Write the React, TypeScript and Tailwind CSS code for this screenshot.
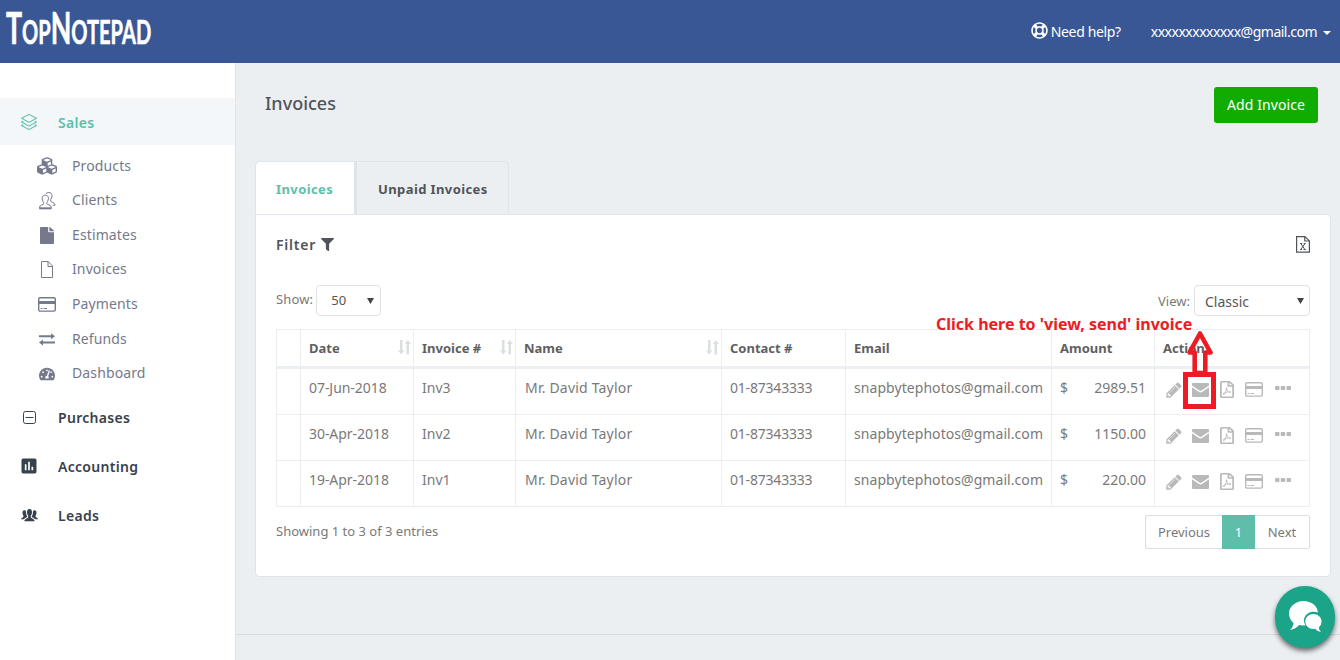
import type { ReactNode } from 'react'
import { FaCubes, FaFile, FaFilter, FaRegFilePdf, FaRegLifeRing, FaTachometerAlt } from 'react-icons/fa'
import { MdPoll } from 'react-icons/md'
import { SlLayers } from 'react-icons/sl'

const invoices = [
  { date: '07-Jun-2018', number: 'Inv3', amount: '2989.51' },
  { date: '30-Apr-2018', number: 'Inv2', amount: '1150.00' },
  { date: '19-Apr-2018', number: 'Inv1', amount: '220.00' },
]

const columns = 'grid grid-cols-[24px_113px_102px_206px_124px_206px_103px_155px]'

/* ---- Icons ---- */

function ClientsIcon() {
  return (
    <svg width="17" height="18" viewBox="0 0 17 18" fill="none" stroke="currentColor" strokeWidth="1">
      <path d="M4.7 10.5C3.6 9 3 7.200 3.200 5.800 3.400 4 4.700 3.200 6.300 3.200S9.200 4 9.400 5.800C9.600 7.200 9 9 7.900 10.500v1.300c0 .8 4.300 1.200 4.300 3.200v.8" />
      <path d="M4.700 10.500v1.300C4.700 12.600.6 13 .6 15v.8" />
      <path d="M7 1.600C7.700.8 8.500.500 9.600.500c2 0 3.400 1.200 3.400 3.300 0 1.500-.5 2.700-1.400 3.900v1.300c0 1 4.400 1.700 4.400 3.700v.6h-2.200" />
      <path d="M.2 16.300h12.400" strokeWidth="2" />
    </svg>
  )
}

function PageIcon() {
  return (
    <svg width="12" height="17" viewBox="0 0 12 17" fill="none" stroke="currentColor">
      <path d="M.5.500h6.700l4.300 4.500v11.500H.5zM7 .500v5h4.500" />
    </svg>
  )
}

function CardIcon() {
  return (
    <svg width="18" height="15" viewBox="0 0 18 15" fill="none" stroke="currentColor">
      <rect x=".7" y=".7" width="16.600" height="13.400" rx="1.300" strokeWidth="1.400" />
      <path d="M1 5.500h16" strokeWidth="3" />
      <path d="M2.500 11.500h2M5.500 11.500h3.500" />
    </svg>
  )
}

function ExchangeIcon() {
  return (
    <svg width="16" height="13" viewBox="0 0 16 13" fill="currentColor">
      <path d="M0 2.300h12V.300l4 3-4 3v-2H0zM16 8.600H4v-2l-4 3 4 3v-2h12z" />
    </svg>
  )
}

function MinusSquareIcon() {
  return (
    <svg width="13" height="13" viewBox="0 0 13 13" fill="none" stroke="currentColor">
      <rect x=".5" y=".5" width="12" height="12" rx="2" />
      <path d="M2.500 6.500h8" />
    </svg>
  )
}

function LeadsIcon() {
  return (
    <svg width="17" height="13" viewBox="0 0 17 13" fill="currentColor">
      <path d="M8.500 0C10.200 0 11 1.200 11 3.200c0 1.700-.6 2.700-1.200 3.500v1.500c0 1 3.900 1.500 3.900 4H3.300c0-2.500 3.900-3 3.900-4V6.700C6.600 5.900 6 4.900 6 3.200 6 1.200 6.800 0 8.500 0z" />
      <path d="M3.400 1.300c1 0 1.700.6 1.700 2.200 0 1.600.3 2.500 1.200 3.900 0 1-2.800 1.400-3.500 2.800H0c0-1.700 2.400-1.600 2.400-2.500V6.500C1.900 5.800 1.500 5 1.500 3.700 1.500 2.100 2.300 1.300 3.400 1.300z" />
      <path d="M13.600 1.300c-1 0-1.700.6-1.700 2.200 0 1.600-.3 2.500-1.200 3.900 0 1 2.800 1.400 3.500 2.800H17c0-1.700-2.400-1.600-2.400-2.500V6.500c.5-.7.9-1.500.9-2.800 0-1.600-.8-2.400-1.900-2.400z" />
    </svg>
  )
}

function SortIcon() {
  return (
    <svg className="shrink-0 -translate-y-px text-[#dcdfe0]" width="13" height="15" viewBox="0 0 13 15" fill="currentColor">
      <path d="M2 0h2.500v10.500H6.300L3.200 14.500 0 10.500h2zM8.500 14.500H11V4h2L9.800 0 6.800 4h1.700z" />
    </svg>
  )
}

function ExcelIcon() {
  return (
    <svg width="14" height="17" viewBox="0 0 14 17" fill="none" stroke="currentColor">
      <path d="M.6.600h8.300l4.500 4.300v11.200H.6zM8.800.600V5h4.600" strokeWidth="1.200" />
      <path d="M4.800 7.500l4 6M9 7.500l-4.300 6M4 7.500h2.200M7.700 7.500h2M4 13.500h1.900M7.500 13.500h2.300" />
    </svg>
  )
}

function PencilIcon() {
  return (
    <svg width="18" height="18" viewBox="0 0 1792 1792" fill="currentColor">
      <path d="M491 1536l91-91-235-235-91 91v107h128v128h107zm523-928q0-22-22-22-10 0-17 7l-542 542q-7 7-7 17 0 22 22 22 10 0 17-7l542-542q7-7 7-17zm-54-192l416 416-832 832h-416v-416zm683 96q0 53-37 90l-166 166-416-416 166-165q36-38 90-38 53 0 91 38l235 234q37 39 37 91z" />
    </svg>
  )
}

function EnvelopeIcon() {
  return (
    <svg width="17" height="14" viewBox="0 0 17 14" fill="currentColor">
      <path d="M1 0h15a1 1 0 0 1 1 1v1.500L9.700 7.500q-1.200.8-2.400 0L0 2.500V1a1 1 0 0 1 1-1z" />
      <path d="M0 4.200l6.600 4.600q1.900 1.200 3.800 0L17 4.200V13a1 1 0 0 1-1 1H1a1 1 0 0 1-1-1z" />
    </svg>
  )
}

function MoreIcon() {
  return (
    <svg width="16" height="4" viewBox="0 0 16 4" fill="currentColor">
      <rect width="4.500" height="4" rx="1" />
      <rect x="5.700" width="4.500" height="4" rx="1" />
      <rect x="11.500" width="4.500" height="4" rx="1" />
    </svg>
  )
}

function ChatIcon() {
  return (
    <svg width="33" height="32" viewBox="0 0 33 32" fill="currentColor">
      <path d="M14.500 0C22.500 0 28.600 5 28.900 11.500c-1.600-.7-3.300-.9-5-.8-5.100.3-8.900 4-8.900 8.700 0 1.900.6 3.400 1.500 4.800-2.300.4-4.300.3-6.400-.2-2.300 2.600-5 4.600-9 4.900 2-2.100 3.300-4.200 3.400-7C1.700 19.700 0 16.300 0 12.500 0 5.600 6.500 0 14.500 0z" />
      <path d="M24.300 13c4.600 0 8.200 3.200 8.200 7.500 0 2.500-1.100 4.600-2.700 5.800.1 1.800.9 3.300 2.400 4.700-2.600-.2-4.400-1.400-5.900-3.200-5.500 1-10-2.500-10-7.300 0-4.300 3.500-7.500 8-7.500z" />
    </svg>
  )
}

/* ---- Sidebar ---- */

const salesItems = [
  { label: 'Products', icon: <FaCubes size={20} /> },
  { label: 'Clients', icon: <ClientsIcon /> },
  { label: 'Estimates', icon: <FaFile className="h-[17px] w-[14px]" preserveAspectRatio="none" /> },
  { label: 'Invoices', icon: <PageIcon /> },
  { label: 'Payments', icon: <CardIcon /> },
  { label: 'Refunds', icon: <ExchangeIcon /> },
  { label: 'Dashboard', icon: <FaTachometerAlt size={16} /> },
]

function NavSection({ icon, label }: { icon: ReactNode; label: string }) {
  return (
    <div className="flex h-[49px] items-center text-[14px] font-semibold text-[#38424d]">
      <span className="flex w-[58px] justify-center">{icon}</span>
      <span className="tracking-[0.3px]">{label}</span>
    </div>
  )
}

function Sidebar() {
  return (
    <aside className="w-[236px] shrink-0 border-r border-[#e0e5e9] bg-white pt-[35px]">
      <div className="flex h-[47px] items-center bg-[#f3f7fa] text-[14px] font-semibold text-[#5fbeaa]">
        <span className="flex w-[58px] justify-center">
          <SlLayers size={16} />
        </span>
        <span className="pt-px tracking-[0.3px]">Sales</span>
      </div>
      <div className="pt-[3px]">
        {salesItems.map((item) => (
          <div key={item.label} className="flex h-[34.550px] items-center text-[14px] text-[#75798b]">
            <span className="ml-[36px] flex w-[22px] justify-center pt-[2px]">{item.icon}</span>
            <span className="ml-[14px] tracking-[0.12px]">{item.label}</span>
          </div>
        ))}
      </div>
      <div className="pt-[3px]">
        <NavSection icon={<MinusSquareIcon />} label="Purchases" />
        <NavSection icon={<MdPoll size={20} />} label="Accounting" />
        <NavSection icon={<LeadsIcon />} label="Leads" />
      </div>
    </aside>
  )
}

/* ---- Invoice table ---- */

function HeadCell({ label, sortable }: { label: string; sortable?: boolean }) {
  return (
    <div className="flex items-center justify-between border-r border-[#ebeff2] pr-[2px] pl-2">
      <span className="pt-[2px]">{label}</span>
      {sortable && <SortIcon />}
    </div>
  )
}

function Cell({ className = 'pl-2', children }: { className?: string; children?: ReactNode }) {
  return <div className={`border-r border-[#ebeff2] pt-[8px] pr-2 ${className}`}>{children}</div>
}

function RowActions({ highlighted }: { highlighted?: boolean }) {
  return (
    <div className="relative flex border-r border-[#ebeff2] pt-[12px] pl-[10px] text-[#b9b9b9]">
      <PencilIcon />
      <span className="ml-[9px] pt-[2px]">
        <EnvelopeIcon />
      </span>
      <FaRegFilePdf className="ml-[11px] h-[17px] w-[14px]" preserveAspectRatio="none" />
      <span className="ml-[11px] pt-px">
        <CardIcon />
      </span>
      <span className="ml-[12px] pt-[5px]">
        <MoreIcon />
      </span>
      {highlighted && (
        <>
          <span className="absolute top-[3px] left-[28px] h-[37px] w-[33px] border-5 border-[#ed1c24]" />
          <svg className="absolute top-[-39px] left-[31px]" width="28" height="43" viewBox="0 0 28 43" fill="none">
            <path d="M11.500 24h5v18h-5z" fill="#fff" />
            <path d="M14 3.500L24.500 22.500H19.300V43H8.700V22.500H3.500z" stroke="#ed1c24" strokeWidth="4.600" strokeLinejoin="round" />
          </svg>
        </>
      )}
    </div>
  )
}

function InvoiceTable() {
  return (
    <div className="w-[1034px] border-t border-l border-[#ebeff2] text-[14px] text-[#797979]">
      <div className={`${columns} h-[39px] border-b-3 border-[#ebeff2] text-[13px] font-bold text-[#5f5f5f]`}>
        <HeadCell label="" />
        <HeadCell label="Date" sortable />
        <HeadCell label="Invoice #" sortable />
        <HeadCell label="Name" sortable />
        <HeadCell label="Contact #" />
        <HeadCell label="Email" />
        <HeadCell label="Amount" />
        <HeadCell label="Action" />
      </div>
      {invoices.map((invoice, i) => (
        <div key={invoice.number} className={`${columns} h-[46px] border-b border-[#ebeff2]`}>
          <Cell />
          <Cell className="pl-2 tracking-[-0.050px]">{invoice.date}</Cell>
          <Cell>{invoice.number}</Cell>
          <Cell className="pl-[9px] tracking-[0.200px]">Mr. David Taylor</Cell>
          <Cell className="pl-2 tracking-[-0.200px]">01-87343333</Cell>
          <Cell className="pl-2 tracking-[0.060px]">snapbytephotos@gmail.com</Cell>
          <Cell>
            <div className="flex justify-between">
              <span>$</span>
              <span>{invoice.amount}</span>
            </div>
          </Cell>
          <RowActions highlighted={i === 0} />
        </div>
      ))}
    </div>
  )
}

function SelectBox({ value, className }: { value: string; className: string }) {
  return (
    <div className={`flex h-[31px] items-center justify-between rounded-[4px] border border-[#dfe2e5] bg-white text-[#565656] ${className}`}>
      <span className="pt-px">{value}</span>
      <svg width="7" height="6" viewBox="0 0 7 6" fill="#444">
        <path d="M0 0h7L3.500 6z" />
      </svg>
    </div>
  )
}

function InvoicePanel() {
  return (
    <section className="h-[363px] w-[1076px] rounded-r-[5px] rounded-bl-[5px] border border-[#dfe4ea] bg-white px-5">
      <div className="flex h-[58px] items-center justify-between">
        <div className="flex items-center gap-[5px] text-[14px] font-semibold tracking-[0.8px] text-[#505458]">
          Filter <FaFilter size={13} />
        </div>
        <span className="text-[#505458]">
          <ExcelIcon />
        </span>
      </div>
      <div className="flex h-[56px] items-start justify-between pt-[12px] text-[13px] text-[#797979]">
        <div className="flex items-center gap-[3px]">
          <span className="pb-[2px] tracking-[0.150px]">Show:</span>
          <SelectBox value="50" className="w-[65px] pr-[6px] pl-[14px] text-[13px]" />
        </div>
        <div className="flex items-center gap-[4px]">
          <span className="pt-[3px]">View:</span>
          <SelectBox value="Classic" className="w-[116px] pr-[5px] pl-[10px] text-[14px]" />
        </div>
      </div>
      <InvoiceTable />
      <div className="flex items-start justify-between pt-[8px] text-[13px] text-[#797979]">
        <span className="pt-[7px]">Showing 1 to 3 of 3 entries</span>
        <div className="flex h-[34px] items-stretch leading-[34px]">
          <span className="w-[77px] rounded-l-[3px] border border-r-0 border-[#ddd] text-center leading-[33px]">Previous</span>
          <span className="w-[33px] bg-[#5fbeaa] text-center text-white">1</span>
          <span className="w-[55px] rounded-r-[3px] border border-l-0 border-[#ddd] text-center leading-[33px]">Next</span>
        </div>
      </div>
    </section>
  )
}

export default function App() {
  return (
    <div className="relative flex h-[660px] w-[1340px] flex-col overflow-hidden bg-[#ebeff2] font-['Noto_Sans',sans-serif]">
      <header className="flex h-[63px] shrink-0 items-center justify-between bg-[#3a5795] pr-[9px] pl-[6px] text-white">
        <div className="mb-[10px] w-[146px] origin-left scale-x-[0.608] font-['Liberation_Sans_Narrow','Lato',sans-serif] text-[33px] leading-none font-bold whitespace-nowrap [-webkit-text-stroke:0.6px_white]">
          <span className="text-[44px]">T</span>OP<span className="text-[44px]">N</span>OTEPAD
        </div>
        <div className="flex items-center text-[14px]">
          <FaRegLifeRing className="mb-[2px]" size={17} />
          <span className="ml-[3px] tracking-[-0.350px]">Need help?</span>
          <span className="ml-[30px] tracking-[-0.500px]">xxxxxxxxxxxxx@gmail.com</span>
          <span className="mt-[3px] ml-[6px] border-x-4 border-t-4 border-x-transparent border-t-white" />
        </div>
      </header>

      <div className="flex min-h-0 flex-1">
        <Sidebar />
        <main className="flex-1">
          <div className="flex h-[98px] items-start justify-between pt-[24px] pr-[22px] pl-[29px]">
            <h1 className="mt-[3px] text-[18px] font-medium text-[#505458]">Invoices</h1>
            <button className="h-[36px] w-[104px] rounded-[3px] bg-[#12ab00] pb-[2px] text-[14px] tracking-[0.080px] text-white">
              Add Invoice
            </button>
          </div>

          <div className="flex h-[53px] pl-[19px] text-[13px] font-bold tracking-[0.400px]">
            <div className="flex w-[99px] items-center rounded-tl-[5px] border-t border-l border-[#dfe4ea] bg-white pt-[3px] pl-5 text-[#5fbeaa]">
              Invoices
            </div>
            <div className="flex w-[155px] items-center rounded-tr-[5px] border-t border-r border-l-3 border-[#dfe4ea] pt-[3px] pl-[21px] text-[#505458]">
              Unpaid Invoices
            </div>
          </div>
          <div className="pl-[19px]">
            <InvoicePanel />
          </div>
          <div className="mt-[57px] border-t border-[#d5dade]" />
        </main>
      </div>

      <div className="absolute top-[312px] left-[936px] text-[16px] font-bold whitespace-nowrap text-[#ed1c24]">
        Click here to 'view, send' invoice
      </div>

      <div className="absolute top-[586px] left-[1275px] flex h-[62px] w-[60px] items-center justify-center rounded-full bg-[#1ba488] text-white shadow-[0_3px_5px_rgba(0,0,0,0.55)]">
        <ChatIcon />
      </div>
    </div>
  )
}
